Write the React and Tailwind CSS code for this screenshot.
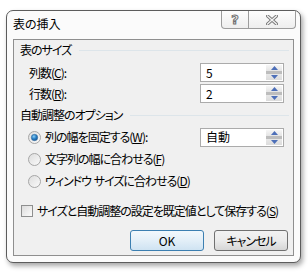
import React from 'react';

const font = "font-['Noto_Sans_CJK_JP','Noto_Sans',sans-serif] [font-feature-settings:'palt']";
const label = 'text-[12px] leading-none tracking-[-1px] whitespace-nowrap';

function Spinner() {
  return (
    <div className="w-[16px] shrink-0 self-stretch m-[1px] flex flex-col bg-[#eeeeee]">
      <div className="flex-1 flex items-center justify-center bg-gradient-to-b from-[#f6f6f6] to-[#e4e4e4]">
        <svg width="7" height="4" viewBox="0 0 7 4">
          <path d="M0 4 L3.5 0 L7 4 Z" fill="#4d6fb8" />
        </svg>
      </div>
      <div className="h-[3px] bg-[#bdbdbd]" />
      <div className="flex-1 flex items-center justify-center bg-gradient-to-b from-[#e8e8e8] to-[#dcdcdc]">
        <svg width="7" height="4" viewBox="0 0 7 4">
          <path d="M0 0 L3.5 4 L7 0 Z" fill="#4d6fb8" />
        </svg>
      </div>
    </div>
  );
}

function SpinBox({ value }) {
  return (
    <div className="w-[84px] h-[19px] shrink-0 border border-[#ababab] bg-white flex items-center">
      <span className="flex-1 pl-[5px] text-[12px] leading-none">{value}</span>
      <Spinner />
    </div>
  );
}

function Radio({ checked }) {
  return (
    <svg width="13" height="13" viewBox="0 0 13 13" className="shrink-0">
      <defs>
        <linearGradient id="rg" x1="0" y1="0" x2="1" y2="1">
          <stop offset="0" stopColor="#dcdcdc" />
          <stop offset="1" stopColor="#fbfbfb" />
        </linearGradient>
        <radialGradient id="rb" cx="0.4" cy="0.35" r="0.7">
          <stop offset="0" stopColor="#8fd0f5" />
          <stop offset="0.5" stopColor="#2a82c8" />
          <stop offset="1" stopColor="#0f4f8f" />
        </radialGradient>
      </defs>
      <circle cx="6.5" cy="6.5" r="6" fill="url(#rg)" stroke="#a6a6a6" strokeWidth="1" />
      {checked && <circle cx="6.5" cy="6.5" r="3.2" fill="url(#rb)" stroke="#3a6f9e" strokeWidth="0.6" />}
    </svg>
  );
}

function Heading({ children, className = '' }) {
  return (
    <div className={`h-[16px] flex items-center gap-[8px] pl-[6px] pr-[4px] ${className}`}>
      <span className={label}>{children}</span>
      <div className="flex-1 h-px bg-[#dde5ea]" />
    </div>
  );
}

export default function App() {
  return (
    <div className={`w-[308px] h-[276px] bg-white pt-[10px] pl-[6px] text-black ${font}`}>
      <div className="w-[295px] h-[253px] rounded-[7px] border border-[#5c5c5c] bg-[#fbfbfb] shadow-[2px_3px_5px_rgba(0,0,0,0.35)] flex flex-col">
        {/* title bar */}
        <div className="h-[28px] flex items-start justify-between">
          <span className="pl-[6px] pt-[7px] text-[12px] leading-none">表の挿入</span>
          <div className="flex mr-[4px]">
            <div className="w-[28px] h-[18px] border border-t-0 border-[#9c9c9c] rounded-bl-[4px] bg-gradient-to-b from-[#fdfdfd] to-[#eeeeee] flex items-center justify-center">
              <span className="text-[13px] font-bold leading-none text-[#f4f4f4] [-webkit-text-stroke:1px_#6f6f6f] font-['DejaVu_Sans',sans-serif]">?</span>
            </div>
            <div className="w-[47px] h-[18px] border border-l-0 border-t-0 border-[#9c9c9c] rounded-br-[4px] bg-gradient-to-b from-[#fdfdfd] to-[#eeeeee] flex items-center justify-center">
              <svg width="12" height="10" viewBox="0 0 12 10">
                <path d="M1.5 1 L10.5 9 M10.5 1 L1.5 9" stroke="#747474" strokeWidth="3.2" strokeLinecap="square" />
                <path d="M1.5 1 L10.5 9 M10.5 1 L1.5 9" stroke="#f2f2f2" strokeWidth="1.4" strokeLinecap="square" />
              </svg>
            </div>
          </div>
        </div>

        {/* client area */}
        <div className="flex-1 mx-[6px] mb-[6px] border border-[#8f8f8f] bg-[#f0f0f0] flex flex-col">
          <Heading className="mt-[2px]">表のサイズ</Heading>
          <div className="mt-[5px] flex flex-col gap-[2px]">
            <div className="h-[19px] flex items-center justify-between pl-[15px] pr-[9px]">
              <span className={label}>列数(<span className="underline">C</span>):</span>
              <SpinBox value="5" />
            </div>
            <div className="h-[19px] flex items-center justify-between pl-[15px] pr-[9px]">
              <span className={label}>行数(<span className="underline">R</span>):</span>
              <SpinBox value="2" />
            </div>
          </div>

          <Heading className="mt-[4px]">自動調整のオプション</Heading>
          <div className="mt-[3px] flex flex-col">
            <div className="h-[22px] flex items-center justify-between pl-[14px] pr-[9px]">
              <div className="flex items-center gap-[4px]">
                <Radio checked />
                <span className={label}>列の幅を固定する(<span className="underline">W</span>):</span>
              </div>
              <SpinBox value="自動" />
            </div>
            <div className="h-[22px] flex items-center gap-[4px] pl-[14px]">
              <Radio />
              <span className={label}>文字列の幅に合わせる(<span className="underline">F</span>)</span>
            </div>
            <div className="h-[22px] flex items-center gap-[4px] pl-[14px]">
              <Radio />
              <span className={label}>ウィンドウ<span className="tracking-normal">{'\u00a0'}</span>サイズに合わせる(<span className="underline">D</span>)</span>
            </div>
          </div>

          <div className="mt-[10px] h-[18px] flex items-center gap-[4px] pl-[7px]">
            <div className="w-[12px] h-[12px] shrink-0 border border-[#8e8f8f] bg-gradient-to-br from-[#dcdcdc] to-[#fbfbfb]" />
            <span className={label}>サイズと自動調整の設定を既定値として保存する(<span className="underline">S</span>)</span>
          </div>

          <div className="mt-[10px] flex justify-end gap-[10px] pr-[5px]">
            <button className="w-[74px] h-[21px] rounded-[3px] border border-[#3c7fb1] bg-gradient-to-b from-[#f2f8fc] via-[#e3eff8] to-[#cfe3f2] text-[12px] leading-none">
              OK
            </button>
            <button className="w-[74px] h-[21px] rounded-[3px] border border-[#707070] bg-gradient-to-b from-[#f2f2f2] via-[#ebebeb] to-[#d6d6d6] text-[12px] leading-none tracking-[-1px]">
              キャンセル
            </button>
          </div>
        </div>
      </div>
    </div>
  );
}
